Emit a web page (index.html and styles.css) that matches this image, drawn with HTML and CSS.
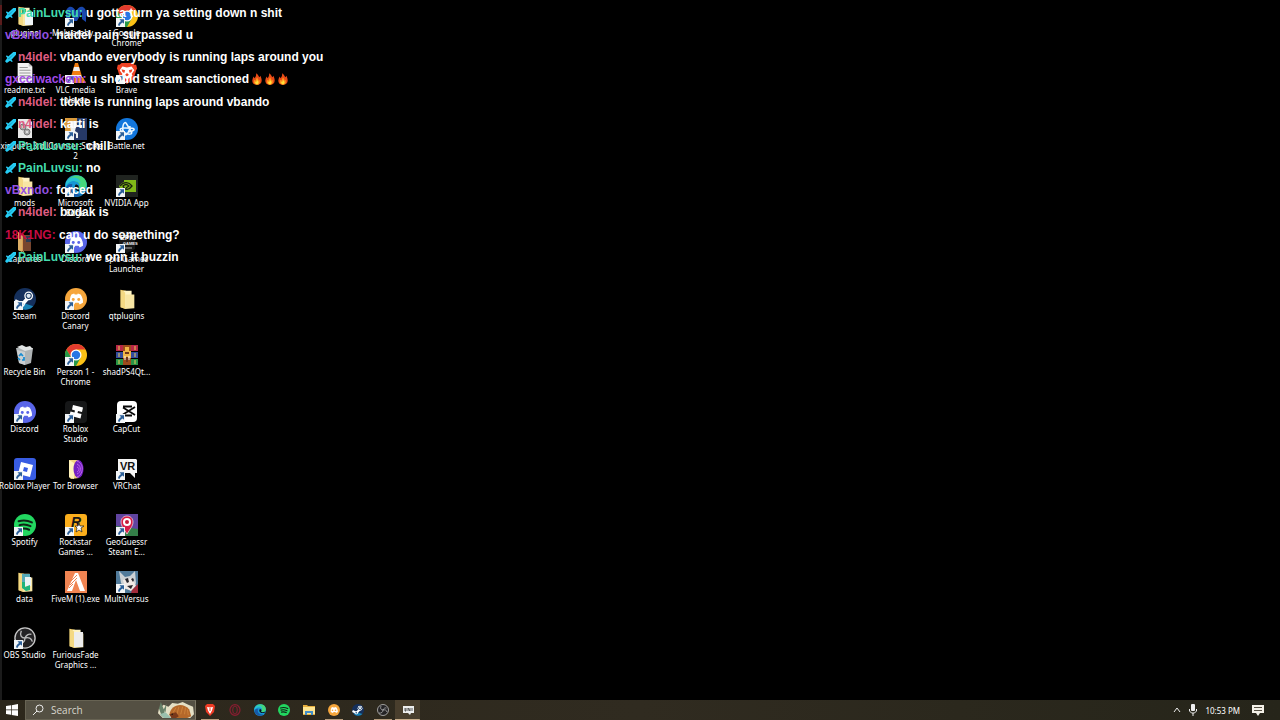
FILE: index.html
```html
<!DOCTYPE html>
<html lang="en">
<head>
<meta charset="utf-8">
<meta name="viewport" content="width=device-width, initial-scale=1">
<title>Desktop</title>
<link rel="stylesheet" href="styles.css">
</head>
<body>
<svg class="defs" aria-hidden="true">
  <symbol id="arrow" viewBox="0 0 9 9"><path fill="#f2f5f7" d="M0 0h9v9H0z"/><path fill="#2c5f98" d="M3.5 1.2H8v4.5L6.6 4.4C5 5.4 4 6.500 3.500 8L2 7.300C2.100 5.600 3.200 4 5 2.900z"/></symbol>
  <symbol id="folder" viewBox="0 0 24 24"><path fill="#dcb957" d="M5 2l6 1v20l-6-2z"/><path fill="#fff4c4" d="M8 3h9v18H8z"/><path fill="#f4d983" d="M5 2l5 3v18l-5-2z"/><path fill="#f8e6a4" d="M10 7h10v15l-10 1z"/></symbol>
  <symbol id="chrome" viewBox="0 0 24 24"><circle cx="12" cy="12" r="12" fill="#fbc116"/><path fill="#e33b2e" d="M1.600 6A12 12 0 0 1 22.400 6H12L7 15z"/><path fill="#279847" d="M1.600 6A12 12 0 0 0 12 24l5-9H7z"/><circle cx="12" cy="12" r="6" fill="#fff"/><circle cx="12" cy="12" r="4.600" fill="#2876e4"/></symbol>
  <symbol id="brave" viewBox="0 0 24 24"><path fill="#f04425" d="M6 1h12l2 2h2l1 4-1 2-3 10-7 5-7-5L2 9 1 7l1-4h2z"/><path fill="#fff" d="M7 5l5 1 5-1 3 4-3 4 1 2-6 4-6-4 1-2-3-4z"/><path fill="#f04425" d="M6 8l4 1-1 3-2-1zm12 0l-4 1 1 3 2-1zm-6 4l2 2-2 2-2-2z"/></symbol>
  <symbol id="brave-small" viewBox="0 0 12 12"><path fill="#ee3b24" d="M3 0h6l2 2-1 6-4 4-4-4-1-6z"/><path fill="#fff" d="M3 3l3 .5L9 3 8 6.500 6 10 4 6.500z"/><path fill="#ee3b24" d="M5.500 4h1v3h-1z"/></symbol>
  <symbol id="face" viewBox="0 0 24 24"><path fill="#fff" d="M7 7l3-1 .6 1h2.800l.6-1 3 1c2 3 3 6 2.600 9l-3.600 2-1.200-2h-3.600L10 18l-4.600-2C5 13 5.500 10 7 7z"/></symbol>
  <symbol id="discord" viewBox="0 0 24 24"><circle cx="12" cy="12" r="12" fill="#5965e8"/><use href="#face"/><circle cx="9" cy="12.500" r="1.600" fill="#5965e8"/><circle cx="15" cy="12.500" r="1.600" fill="#5965e8"/></symbol>
  <symbol id="canary" viewBox="0 0 24 24"><circle cx="12" cy="12" r="12" fill="#f6a63c"/><use href="#face"/><circle cx="9" cy="12.500" r="1.600" fill="#f6a63c"/><circle cx="15" cy="12.500" r="1.600" fill="#f6a63c"/></symbol>
  <symbol id="edge" viewBox="0 0 24 24"><circle cx="12" cy="12" r="12" fill="#1596d4"/><path fill="#45d67b" d="M2 7C7-2 20-1 23 7c3 8-5 11-9 8 3-3 2-7-2-8-4-1-8 0-10 0z"/><path fill="#29c2d5" d="M1 8C6 0 16 2 17 9c-7-5-14-2-16 4z"/><path fill="#1759a8" d="M8 10c-2 6 2 12 11 11C11 27 2 22 1 14c1-3 4-5 7-4z"/><path fill="#071018" d="M12 10c-3 3-1 8 5 8 3 0 5-1 6-3-3 2-8 2-9 0 2-2 1-4-2-5z"/></symbol>
  <symbol id="steam" viewBox="0 0 24 24"><circle cx="12" cy="12" r="12" fill="#15305c"/><path fill="#1982b5" d="M3 19a12 12 0 0 0 18 1l-9-3z"/><path d="M1 14l8 4 7-8" fill="none" stroke="#fff" stroke-width="4"/><circle cx="16" cy="8.500" r="4.800" fill="#fff"/><circle cx="16" cy="8.500" r="3.400" fill="#17365f"/><circle cx="16" cy="8.500" r="2.300" fill="#dce6ef"/><circle cx="8.500" cy="17.500" r="3.200" fill="#fff"/><circle cx="8.500" cy="17.500" r="1.700" fill="#235b87"/></symbol>
  <symbol id="spotify" viewBox="0 0 24 24"><circle cx="12" cy="12" r="12" fill="#22d760"/><path d="M5 8c5-1.500 10-1 14.500 1.200M6 12.200c4-1.200 8-.8 12 1.100M7 16.200c3.500-.8 6.500-.5 9.500 1" fill="none" stroke="#102417" stroke-width="2.200" stroke-linecap="round"/></symbol>
  <symbol id="obs" viewBox="0 0 24 24"><circle cx="12" cy="12" r="11" fill="#242325" stroke="#c8c8c8" stroke-width="1.500"/><path d="M8 4c-2 5 0 8 4 8 4-1 7 0 8 4M12 12c0 4-3 7-8 6M12 12c1-3 4-5 7-4" fill="none" stroke="#b9b9b9" stroke-width="1.500"/></symbol>
  <symbol id="doc" viewBox="0 0 24 24"><path fill="#f3f3f3" d="M4 1h12l4 4v18H4z"/><path fill="#c4c4c4" d="M16 1v4h4z"/><path d="M6 6h9M6 9h12M6 12h12M6 15h12M6 18h12" stroke="#929292"/></symbol>
  <symbol id="sword" viewBox="0 0 12 12"><path fill="#26cdf5" d="M12 0v3L7 8.500 8.500 10l-1 1L5.500 9.500 2 12 0 10l2.500-3.500L1 4.500l1-1L3.500 5 9 0z"/><path fill="#0b86ad" d="M10 2L4 8l-.7-.7z"/></symbol>
  <symbol id="fire" viewBox="0 0 12 14"><path fill="#e94b16" d="M5 0c3 2 3 4 4 5l1-2c3 6 2 11-4 11S-1 9 2 4l1 2c2-2 2-4 2-6z"/><path fill="#ff951d" d="M6 5c1 2 2 3 2 4l1-1c1 3 0 6-3 6s-5-3-3-6l1 1z"/><path fill="#ffe13b" d="M6 8c1 2 3 3 1 5-1 1-4 0-3-3l1 1z"/></symbol>
</svg>

<main class="desktop">
  <section class="icons" aria-label="Desktop icons">
    <button class="item"><svg class="icon"><use href="#folder"/><path fill="#36a868" d="M8 4h4v4H8z"/><path fill="#eff5f7" d="M11 7h8v13h-8z"/></svg><span>plugins</span></button>
    <button class="item"><svg class="icon" viewBox="0 0 22 22"><path fill="#1948ae" d="M1 20V8C1 1 8-1 11 7c3-8 10-6 10 1v9l-4-3V7l-5 9h-3L5 7v13z"/><use href="#arrow" y="13" width="9" height="9"/></svg><span>Malwareby...</span></button>
    <button class="item"><svg class="icon" viewBox="0 0 22 22"><use href="#chrome"/><use href="#arrow" y="13" width="9" height="9"/></svg><span>Google<br>Chrome</span></button>
    <button class="item"><svg class="icon"><use href="#doc"/></svg><span>readme.txt</span></button>
    <button class="item"><svg class="icon" viewBox="0 0 22 22"><path fill="#f38220" d="M4 15h14l3 6H1z"/><path fill="#f17d12" d="M10 1h3l5 17H5z"/><path fill="#eee" d="M9 5h5l1 4H8zm-2 8h9l1 3H6z"/><use href="#arrow" y="13" width="9" height="9"/></svg><span>VLC media<br>player</span></button>
    <button class="item"><svg class="icon" viewBox="0 0 22 22"><use href="#brave"/><use href="#arrow" y="13" width="9" height="9"/></svg><span>Brave</span></button>
    <button class="item"><svg class="icon" viewBox="0 0 22 22"><path fill="#e8e8e8" d="M4 1h11l3 3v16H4z"/><g fill="#aaa" stroke="#777"><circle cx="9" cy="9" r="3"/><circle cx="13" cy="14" r="3"/></g><g fill="#eee"><circle cx="9" cy="9" r="1"/><circle cx="13" cy="14" r="1"/></g></svg><span>xinput1_3.dll</span></button>
    <button class="item"><svg class="icon" viewBox="0 0 22 22"><path fill="#d99a3c" d="M0 0h22v22H0z"/><path fill="#263967" d="M12 0h10v22H8V11l4-3z"/><path fill="#eef0ed" d="M6 3h5l1 4h5v2h-6l-1 4 3 2v5h-2v-4l-5-2-1-6z"/><use href="#arrow" y="13" width="9" height="9"/></svg><span>Counter-Strike<br>2</span></button>
    <button class="item"><svg class="icon" viewBox="0 0 22 22"><circle cx="11" cy="11" r="11" fill="#1276dc"/><path fill="none" stroke="#eaf7ff" stroke-width="1.500" d="M8 15C5 10 8 3 10 5l5 8c3 4-3 4-8 1-4-2-4-4 2-4s10 0 9 2c-1 1-4 2-6 2M8 16c3 3 6-4 6-8"/><use href="#arrow" y="13" width="9" height="9"/></svg><span>Battle.net</span></button>
    <button class="item"><svg class="icon"><use href="#folder"/></svg><span>mods</span></button>
    <button class="item"><svg class="icon" viewBox="0 0 22 22"><use href="#edge"/><use href="#arrow" y="13" width="9" height="9"/></svg><span>Microsoft<br>Edge</span></button>
    <button class="item"><svg class="icon" viewBox="0 0 22 22"><path fill="#202420" d="M0 0h22v22H0z"/><path fill="#80b918" d="M8 5h12v12H9c-3-1-5-3-6-6 1-2 3-3 5-4z"/><path fill="none" stroke="#19220f" stroke-width="1.300" d="M4 11c4-5 9-4 12 0-3 4-7 5-9 0 2-2 4-2 6 0l-3 2"/><use href="#arrow" y="13" width="9" height="9"/></svg><span>NVIDIA App</span></button>
    <button class="item"><svg class="icon" viewBox="0 0 22 22"><path fill="#d99a51" d="M4 1l6 3v17l-6-2z"/><path fill="#78452e" d="M9 4h8v16H9z"/><path fill="#293c55" d="M12 5h5v6h-5z"/><path fill="#dcae66" d="M4 1l4 4v16l-4-2z"/></svg><span>Captures</span></button>
    <button class="item"><svg class="icon" viewBox="0 0 22 22"><use href="#discord"/><use href="#arrow" y="13" width="9" height="9"/></svg><span>Discord</span></button>
    <button class="item"><svg class="icon" viewBox="0 0 22 22"><path fill="#171717" d="M3 0h16v18l-8 4-8-4z"/><text class="logo-text" x="4" y="9">EPIC</text><text class="logo-small" x="7" y="14">GAMES</text><path stroke="#aaa" d="M9 17h7"/><use href="#arrow" y="13" width="9" height="9"/></svg><span>Epic Games<br>Launcher</span></button>
    <button class="item"><svg class="icon" viewBox="0 0 22 22"><use href="#steam"/><use href="#arrow" y="13" width="9" height="9"/></svg><span>Steam</span></button>
    <button class="item"><svg class="icon" viewBox="0 0 22 22"><use href="#canary"/><use href="#arrow" y="13" width="9" height="9"/></svg><span>Discord<br>Canary</span></button>
    <button class="item"><svg class="icon"><use href="#folder"/></svg><span>qtplugins</span></button>
    <button class="item"><svg class="icon" viewBox="0 0 22 22"><path fill="#aeb3b5" d="M2 4h17l-2 15-6 2-6-2z"/><path fill="#e1e4e4" d="M3 3l5-2 4 2 4-1 3 3-8 2z"/><path fill="#cacfd1" d="M3 6l8 2v13l-6-2z"/><path fill="none" stroke="#168bd1" stroke-width="1.700" d="M5 12l2-2 2 2M10 13v3H8M6 16l-2-2"/></svg><span>Recycle Bin</span></button>
    <button class="item"><svg class="icon" viewBox="0 0 22 22"><use href="#chrome"/><use href="#arrow" y="13" width="9" height="9"/></svg><span>Person 1 -<br>Chrome</span></button>
    <button class="item"><svg class="icon" viewBox="0 0 22 22"><path fill="#b82847" d="M0 1h22v6H0z"/><path fill="#344c9d" d="M0 8h22v6H0z"/><path fill="#279447" d="M0 15h22v6H0z"/><path fill="#9c4b1c" d="M7 1h8v20H7z"/><path stroke="#e4cb58" d="M3 2v4M3 9v4M3 16v4M19 2v4M19 9v4M19 16v4"/><path fill="#f0b746" d="M9 3h4v4h2v7H7V7h2z"/><path fill="#6e351c" d="M9 8h4v2H9zm1 5h2v5h-2z"/><path stroke="#eee" d="M9 12v4M13 12v4"/></svg><span>shadPS4Qt...</span></button>
    <button class="item"><svg class="icon" viewBox="0 0 22 22"><use href="#discord"/><use href="#arrow" y="13" width="9" height="9"/></svg><span>Discord</span></button>
    <button class="item"><svg class="icon" viewBox="0 0 22 22"><rect width="22" height="22" rx="4" fill="#161718"/><path fill="#fff" d="M8 4l10 2.500-1 4.500-4-1-.5 2 4 1-1 4.500-11-3 1-4 4 1 .5-2-3-1z"/><use href="#arrow" y="13" width="9" height="9"/></svg><span>Roblox<br>Studio</span></button>
    <button class="item"><svg class="icon" viewBox="0 0 22 22"><rect x="1" width="20" height="21" rx="4" fill="#fff"/><path d="M19 6L7 13.500M19 14L7 6.500M7 5.500h9M7 14.500h9" fill="none" stroke="#080808" stroke-width="1.800"/><use href="#arrow" y="13" width="9" height="9"/></svg><span>CapCut</span></button>
    <button class="item"><svg class="icon" viewBox="0 0 22 22"><rect width="22" height="22" rx="3" fill="#385ce2"/><path fill="#fff" fill-rule="evenodd" d="M7 4l12 3-3 12-12-3zM10 9l-1 4 4 1 1-4z"/><use href="#arrow" y="13" width="9" height="9"/></svg><span>Roblox Player</span></button>
    <button class="item"><svg class="icon" viewBox="0 0 22 22"><path fill="#f2d37f" d="M4 2h10v18l-8 1-2-2z"/><path fill="#fff2ba" d="M4 2l5 3v16l-5-2z"/><ellipse cx="13.500" cy="11" rx="5" ry="9" fill="#7421c3"/><path d="M12 3c8 3 6 14 0 16M12 6c5 2 4 9 0 10M12 9c3 1 2 4 0 5" fill="none" stroke="#bf65eb"/></svg><span>Tor Browser</span></button>
    <button class="item"><svg class="icon" viewBox="0 0 22 22"><path fill="#f5f5f5" d="M2 1h18l1 1v13h-2v5l-5-5H2z"/><text class="vr-text" x="4" y="12">VR</text><use href="#arrow" y="13" width="9" height="9"/></svg><span>VRChat</span></button>
    <button class="item"><svg class="icon" viewBox="0 0 22 22"><use href="#spotify"/><use href="#arrow" y="13" width="9" height="9"/></svg><span>Spotify</span></button>
    <button class="item"><svg class="icon" viewBox="0 0 22 22"><rect width="22" height="22" rx="3" fill="#fbae1c"/><text class="rockstar-text" x="6" y="13">R</text><path fill="#fff" stroke="#1b1b1b" stroke-width=".7" d="M14 9l1 3h4l-3 2 1 4-3-2-3 2 1-4-2-2h3z"/><use href="#arrow" y="13" width="9" height="9"/></svg><span>Rockstar<br>Games ...</span></button>
    <button class="item"><svg class="icon" viewBox="0 0 22 22"><path fill="#6044a0" d="M0 0h22v22H0z"/><path fill="#347f48" d="M0 12l22 3v7H0z"/><path fill="#d71e48" stroke="#f3dfe6" stroke-width=".7" d="M11 20C8 15 5 12 5 8c0-8 12-8 12 0 0 4-3 7-6 12z"/><circle cx="11" cy="8" r="4" fill="#fff"/><circle cx="11" cy="8" r="2" fill="#c31938"/><use href="#arrow" y="13" width="9" height="9"/></svg><span>GeoGuessr<br>Steam E...</span></button>
    <button class="item"><svg class="icon"><use href="#folder"/><path fill="#54aab9" d="M8 3h8v8H8z"/><path fill="#e9f3f4" d="M11 6h6v9h-6z"/><path fill="#1eb47b" d="M8 11h3v5l5-2v5l-4 1-4-3z"/></svg><span>data</span></button>
    <button class="item"><svg class="icon" viewBox="0 0 22 22"><path fill="#f08452" d="M0 0h22v22H0z"/><path fill="#fff" d="M10 2h3l7 18h-5l-4-11-4 11H2z"/><path stroke="#f08452" d="M6 10l6-6M5 14l7-7M4 17l4-4"/></svg><span>FiveM (1).exe</span></button>
    <button class="item"><svg class="icon" viewBox="0 0 22 22"><path fill="#507a9a" d="M0 0h22v22H0z"/><path fill="#cbd1d5" d="M3 0l6 6 5-1 5-5 1 12-3 7-8-1-4-6z"/><path fill="#f1e9e5" d="M7 9l9-2 4 8-5 5-6-3z"/><path fill="#26262d" d="M9 8l2 4 2-1-1-4zm6 0l2 3 1-2-1-2zm-4 7l6-1-2 4z"/><path fill="#a02b3b" d="M16 19l6-6v9h-7z"/><use href="#arrow" y="13" width="9" height="9"/></svg><span>MultiVersus</span></button>
    <button class="item"><svg class="icon" viewBox="0 0 22 22"><use href="#obs"/><use href="#arrow" y="13" width="9" height="9"/></svg><span>OBS Studio</span></button>
    <button class="item"><svg class="icon"><use href="#folder"/><path fill="#ededed" d="M9 5h9v15H9z"/></svg><span>FuriousFade<br>Graphics ...</span></button>
  </section>

  <section class="chat" aria-label="Chat">
    <p><svg class="badge"><use href="#sword"/></svg><b class="pain">PainLuvsu:</b> u gotta turn ya setting down n shit</p>
    <p><b class="vbx">vBxndo:</b> naidel pain surpassed u</p>
    <p><svg class="badge"><use href="#sword"/></svg><b class="naidel">n4idel:</b> vbando everybody is running laps around you</p>
    <p><b class="gx">gxcciwackem:</b> u should stream sanctioned <svg class="fire"><use href="#fire"/></svg><svg class="fire"><use href="#fire"/></svg><svg class="fire"><use href="#fire"/></svg></p>
    <p><svg class="badge"><use href="#sword"/></svg><b class="naidel">n4idel:</b> tickle is running laps around vbando</p>
    <p><svg class="badge"><use href="#sword"/></svg><b class="naidel">n4idel:</b> karti is</p>
    <p><svg class="badge"><use href="#sword"/></svg><b class="pain">PainLuvsu:</b> chill</p>
    <p><svg class="badge"><use href="#sword"/></svg><b class="pain">PainLuvsu:</b> no</p>
    <p><b class="vbx">vBxndo:</b> forced</p>
    <p><svg class="badge"><use href="#sword"/></svg><b class="naidel">n4idel:</b> bodak is</p>
    <p><b class="king">18K1NG:</b> can u do something?</p>
    <p><svg class="badge"><use href="#sword"/></svg><b class="pain">PainLuvsu:</b> we onn it buzzin</p>
  </section>
</main>

<footer class="taskbar">
  <button class="start" aria-label="Start"><svg class="win" viewBox="0 0 12 12"><path fill="#fff" d="M0 2l5-.7v4.300H0zm5.700-.8L12 0v5.600H5.700zM0 6.300h5v4.400L0 10zm5.700 0H12V12l-6.300-1z"/></svg></button>
  <label class="search"><svg class="lens" viewBox="0 0 12 12"><circle cx="7.500" cy="4.500" r="3.500"/><path d="M5 7L1 11"/></svg><input type="text" placeholder="Search" aria-label="Search"><svg class="critter" viewBox="0 0 38 19"><path fill="#e5e0c5" d="M1 8l5-4 5 2 4-4 6 1 5-2 6 3 5 2 1 8-4 4H5l-5-5z"/><path fill="#668068" d="M3 1l4 10-1 5H4L1 8zm6 2L8 12 6 9z"/><path fill="#b5682a" d="M12 15c1-12 15-14 21-6l2 7-4 2H18z"/><path stroke="#d48a40" stroke-width=".8" d="M16 12l3-5m1 7l2-8m2 8l2-8m2 8l1-7m3 8l-1-6"/><path fill="#79391b" d="M12 14l7-2 3 4-3 2h-5z"/><circle cx="15" cy="14" r=".8" fill="#17130e"/><path fill="#9ac0ad" d="M2 14l6-2 6 6H6z"/></svg></label>
  <nav class="apps" aria-label="Apps">
    <button class="app running" aria-label="Brave"><svg><use href="#brave-small"/></svg></button>
    <button class="app" aria-label="Opera GX"><svg viewBox="0 0 12 12"><ellipse cx="6" cy="6" rx="5" ry="5.300" fill="none" stroke="#871d31" stroke-width="1.200"/><ellipse cx="6" cy="6" rx="2.300" ry="4" fill="none" stroke="#871d31"/></svg></button>
    <button class="app" aria-label="Microsoft Edge"><svg><use href="#edge"/></svg></button>
    <button class="app" aria-label="Spotify"><svg><use href="#spotify"/></svg></button>
    <button class="app" aria-label="File Explorer"><svg viewBox="0 0 12 12"><path fill="#e6ad3c" d="M0 1h4l1 1h7v9H0z"/><path fill="#ffe591" d="M0 3h12v7H0z"/><path fill="#448fc9" d="M2 7h8v4H8V9H4v2H2z"/></svg></button>
    <button class="app running" aria-label="Discord Canary"><svg><use href="#canary"/></svg></button>
    <button class="app" aria-label="Steam"><svg><use href="#steam"/></svg></button>
    <button class="app running" aria-label="OBS Studio"><svg><use href="#obs"/></svg></button>
    <button class="app running active" aria-label="Chat overlay"><svg viewBox="0 0 12 12"><path fill="#eee" d="M1 2h11v7H9l-1 2-2-2H1z"/><path d="M3 4v3h1V4M6 7V4l2 3V4M10 4v3" fill="none" stroke="#333" stroke-width=".8"/></svg></button>
  </nav>
  <div class="tray">
    <button aria-label="Show hidden icons"><svg class="chevron" viewBox="0 0 8 8"><path d="M1 6l3-4 3 4"/></svg></button>
    <button aria-label="Microphone"><svg class="mic" viewBox="0 0 8 12"><rect x="2" width="4" height="7" rx="1" fill="#eee"/><path d="M.5 5v2l2 2h3l2-2V5M4 9v3" fill="none" stroke="#eee"/></svg></button>
    <time>10:53 PM</time>
    <button aria-label="Notifications"><svg class="note" viewBox="0 0 12 12"><path fill="#f4f1e8" d="M0 1h12v8H8l-2 3-2-3H0z"/><path stroke="#555044" d="M2 3.500h8M2 6.500h8"/></svg></button>
  </div>
</footer>
</body>
</html>
```
FILE: styles.css
```css
* { box-sizing: border-box; }
body {
  margin: 0;
  min-height: 100vh;
  display: flex;
  flex-direction: column;
  background: #000;
  color: #fff;
  font-family: "Noto Sans", "Open Sans", sans-serif;
}
button {
  padding: 0;
  border: 0;
  background: none;
  color: inherit;
  font: inherit;
}
.defs { position: absolute; width: 0; height: 0; }
.desktop {
  position: relative;
  flex: 1;
  display: flex;
  background: linear-gradient(#1b1b1b 5px, #5a1c1c 5px 25px, #1b1b1b 25px) left / 2px 100% no-repeat;
}
.icons {
  display: grid;
  grid-template-columns: repeat(3, 51px);
  grid-template-rows: repeat(12, minmax(0, 1fr));
  padding: 5px 0 16px;
  margin-left: -1px;
}
.item {
  display: flex;
  flex-direction: column;
  align-items: center;
  gap: 1px;
  min-width: 0;
  min-height: 0;
  font-size: 8px;
  line-height: 10px;
  text-align: center;
  white-space: nowrap;
}
.icon { width: 22px; height: 22px; flex: none; }
.item span { text-shadow: 1px 1px 1px #000; }
.logo-text { font: bold 7px "Liberation Sans", sans-serif; fill: #eee; }
.logo-small { font: bold 4px "Liberation Sans", sans-serif; fill: #eee; }
.vr-text { font: bold 11px "Liberation Sans", sans-serif; fill: #111; }
.rockstar-text { font: italic bold 14px "Liberation Sans", sans-serif; fill: #161616; }

.chat {
  position: absolute;
  top: 2px;
  left: 5px;
  height: 266px;
  display: grid;
  grid-template-rows: repeat(12, 1fr);
  font: bold 12px/22px "Liberation Sans", Arial, sans-serif;
  white-space: nowrap;
}
.chat p { margin: 0; }
.badge { width: 11px; height: 11px; margin-right: 2px; vertical-align: -2px; }
.fire { width: 10px; height: 12px; margin-right: 3px; vertical-align: -2px; }
.pain { color: #43dcae; }
.naidel { color: #df5d82; }
.vbx { color: #9250e0; }
.gx { color: #a24be8; }
.king { color: #c60b43; }

.taskbar {
  height: 20px;
  display: flex;
  background: linear-gradient(90deg, #2c271b, #302b20 50%, #26251a);
}
.start { width: 25px; padding-right: 1px; display: grid; place-items: center; }
.win { width: 12px; height: 12px; }
.search {
  width: 171px;
  display: flex;
  align-items: center;
  gap: 7px;
  padding-left: 6px;
  background: #545043;
  border: 1px solid #676353;
  border-right-color: #7b7664;
}
.lens { width: 12px; height: 12px; fill: none; stroke: #eee; stroke-width: 1; }
.search input {
  flex: 1;
  min-width: 0;
  padding: 0;
  border: 0;
  background: none;
  color: #fff;
  font: 10px "Open Sans", "Noto Sans", sans-serif;
}
.search input::placeholder { color: #d8d6cd; opacity: 1; }
.critter { width: 38px; height: 18px; }
.apps {
  width: 222px;
  margin-left: 2px;
  display: grid;
  grid-template-columns: repeat(9, 1fr);
}
.app {
  display: grid;
  place-items: center;
  border-top: 2px solid transparent;
  border-bottom: 2px solid transparent;
}
.app svg { width: 12px; height: 12px; }
.running {
  background: linear-gradient(#b59c7c, #b59c7c) center bottom / 18px 1px no-repeat border-box;
}
.active {
  background:
    linear-gradient(#c9ad8a, #c9ad8a) center bottom / 25px 1px no-repeat border-box,
    #493e2d border-box;
}
.tray {
  margin-left: auto;
  display: flex;
  align-items: center;
  gap: 8px;
  padding-right: 16px;
  font-size: 8px;
}
.tray button { display: grid; place-items: center; }
.chevron { width: 8px; height: 8px; fill: none; stroke: #eee; }
.mic { width: 8px; height: 12px; }
.note { width: 12px; height: 12px; margin-left: 4px; }
```
